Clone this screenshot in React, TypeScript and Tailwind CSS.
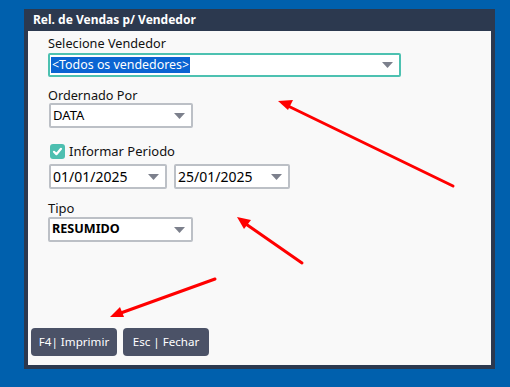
function Caret() {
  return (
    <svg width="11" height="6" viewBox="0 0 11 6" className="shrink-0">
      <path d="M0 0 H11 L5.5 6 Z" fill="#7c808c" />
    </svg>
  );
}

function Select({ value, className, textClass }: { value: string; className: string; textClass: string }) {
  return (
    <div className={`flex items-center justify-between bg-white border-2 border-[#bcc0c6] rounded-[2px] pl-[2px] pr-[6px] h-[25px] ${className}`}>
      <span className={`text-black leading-none ${textClass}`}>{value}</span>
      <Caret />
    </div>
  );
}

export default function App() {
  return (
    <div className="relative w-[510px] h-[387px] bg-[#0060ad] pt-[9px] pl-[24px] font-['Noto_Sans',sans-serif] overflow-hidden">
      <div className="w-[471px] h-[360px] bg-[#2c394f] flex flex-col">
        <div className="h-[22px] flex items-center pl-[9px] text-white text-[12px] font-bold">
          Rel. de Vendas p/ Vendedor
        </div>
        <div className="flex-1 mx-[4px] mb-[4px] bg-[#f9f9f9] flex flex-col">
          <div className="pl-[20px] pt-[3px] flex flex-col">
            <span className="text-[12.7px] text-[#111] leading-[18px]">Selecione Vendedor</span>
            <div className="mt-[1px] flex items-center justify-between bg-white border-2 border-[#4dc1b1] rounded-[2px] w-[353px] h-[24px] pl-[1px] pr-[6px]">
              <span className="bg-[#0a64d2] text-white text-[12.4px] leading-[16px] px-[1px]">&lt;Todos os vendedores&gt;</span>
              <Caret />
            </div>

            <span className="mt-[9px] text-[12.7px] text-[#111] leading-[18px]">Ordernado Por</span>
            <Select value="DATA" className="w-[144px] ml-[1px] mt-[-1px]" textClass="text-[13px]" />

            <div className="mt-[15px] flex items-center gap-[4px] ml-[2px]">
              <div className="w-[15px] h-[15px] rounded-[3px] bg-[#4dbfb0] flex items-center justify-center">
                <svg width="11" height="11" viewBox="0 0 11 11">
                  <path d="M2 5.8 L4.4 8.2 L9 2.8" stroke="white" strokeWidth="2.2" fill="none" strokeLinecap="round" strokeLinejoin="round" />
                </svg>
              </div>
              <span className="text-[13px] text-[#111] leading-[16px]">Informar Periodo</span>
            </div>

            <div className="mt-[5px] ml-[1px] flex gap-[7px]">
              <Select value="01/01/2025" className="w-[118px]" textClass="text-[14px]" />
              <Select value="25/01/2025" className="w-[116px]" textClass="text-[14px]" />
            </div>

            <span className="mt-[11px] text-[13px] text-[#111] leading-[17px]">Tipo</span>
            <Select value="RESUMIDO" className="w-[145px] h-[24px]" textClass="text-[12.6px] font-bold" />
          </div>

          <div className="mt-auto mb-[9px] ml-[3px] flex gap-[6px]">
            <button className="w-[86px] h-[28px] rounded-[4px] bg-[#4b5267] text-white text-[11.6px]">F4| Imprimir</button>
            <button className="w-[86px] h-[28px] rounded-[4px] bg-[#4b5267] text-white text-[11.6px]">Esc | Fechar</button>
          </div>
        </div>
      </div>

      <svg className="absolute left-0 top-0 pointer-events-none" width="510" height="387" viewBox="0 0 510 387">
        <g stroke="#ff0000" strokeWidth="3" strokeLinecap="round" fill="none">
          <line x1="453" y1="186" x2="286" y2="105" />
          <line x1="302" y1="263" x2="243" y2="222" />
          <line x1="215" y1="279" x2="118" y2="314" />
        </g>
        <g fill="#ff0000">
          <path d="M278 101 L293 100 L288 110 Z" />
          <path d="M237 217 L251 220 L244 229 Z" />
          <path d="M110 317 L120 307 L124 317 Z" />
        </g>
      </svg>
    </div>
  );
}
